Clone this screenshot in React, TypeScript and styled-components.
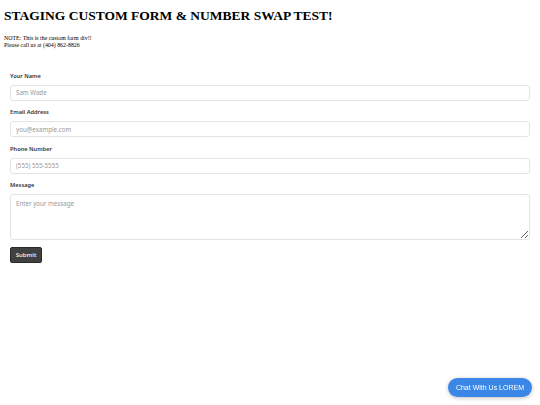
import React from "react";
import styled, { createGlobalStyle } from "styled-components";

const Global = createGlobalStyle`
  html, body { margin: 0; padding: 0; background: #fff; }
  body { font-family: "Liberation Serif", "Times New Roman", serif; color: #000; }
`;

const Page = styled.div`
  padding: 4px 4px 0 4px;
  min-height: 405px;
  box-sizing: border-box;
`;

const Title = styled.h1`
  margin: 2px 0 8.75px 0;
  font-size: 13.5px;
  font-weight: bold;
  line-height: 20px;
`;

const Note = styled.div`
  font-size: 5.9px;
  line-height: 7.5px;
`;

const Form = styled.form`
  display: flex;
  flex-direction: column;
  margin: 22px 6px 0 6px;
  font-family: "Source Sans Pro", "Noto Sans", "Open Sans", sans-serif;
`;

const Field = styled.div`
  display: flex;
  flex-direction: column;
  margin-bottom: 7.5px;
`;

const Label = styled.label`
  font-size: 5.7px;
  font-weight: 600;
  color: #333;
  line-height: 9px;
  margin-bottom: 4px;
`;

const Input = styled.input`
  box-sizing: border-box;
  height: 16px;
  width: 100%;
  border: 1px solid #e4e4e4;
  border-radius: 3px;
  padding: 0 5px;
  font-family: inherit;
  font-size: 6.2px;
  outline: none;
  &::placeholder { color: #999; }
`;

const TextArea = styled.textarea`
  box-sizing: border-box;
  height: 46px;
  width: 100%;
  border: 1px solid #e4e4e4;
  border-radius: 3px;
  padding: 4px 5px;
  font-family: inherit;
  font-size: 6.2px;
  outline: none;
  &::placeholder { color: #999; }
`;

const Submit = styled.button`
  align-self: flex-start;
  margin-top: -0.5px;
  background: #404040;
  color: #fff;
  border: 1px solid #2a2a2a;
  border-radius: 2px;
  height: 16px;
  width: 32px;
  padding: 0;
  font-family: inherit;
  font-size: 6px;
  font-weight: 500;
`;

const Chat = styled.button`
  position: fixed;
  right: 8px;
  bottom: 8px;
  height: 19px;
  padding: 0 8px;
  border: none;
  border-radius: 10px;
  background: #3b87e8;
  color: #fff;
  font-family: "Liberation Sans", Arial, sans-serif;
  font-size: 7px;
  box-shadow: 0 1px 4px rgba(0, 0, 0, 0.25);
`;

export default function App() {
  return (
    <>
      <Global />
      <Page>
        <Title>STAGING CUSTOM FORM &amp; NUMBER SWAP TEST!</Title>
        <Note>
          NOTE: This is the custom form div!!
          <br />
          Please call us at (404) 862-8826
        </Note>
        <Form onSubmit={(e) => e.preventDefault()}>
          <Field>
            <Label>Your Name</Label>
            <Input placeholder="Sam Wade" />
          </Field>
          <Field>
            <Label>Email Address</Label>
            <Input placeholder="you@example.com" />
          </Field>
          <Field>
            <Label>Phone Number</Label>
            <Input placeholder="(555) 555-5555" />
          </Field>
          <Field>
            <Label>Message</Label>
            <TextArea placeholder="Enter your message" />
          </Field>
          <Submit type="submit">Submit</Submit>
        </Form>
      </Page>
      <Chat>Chat With Us LOREM</Chat>
    </>
  );
}
